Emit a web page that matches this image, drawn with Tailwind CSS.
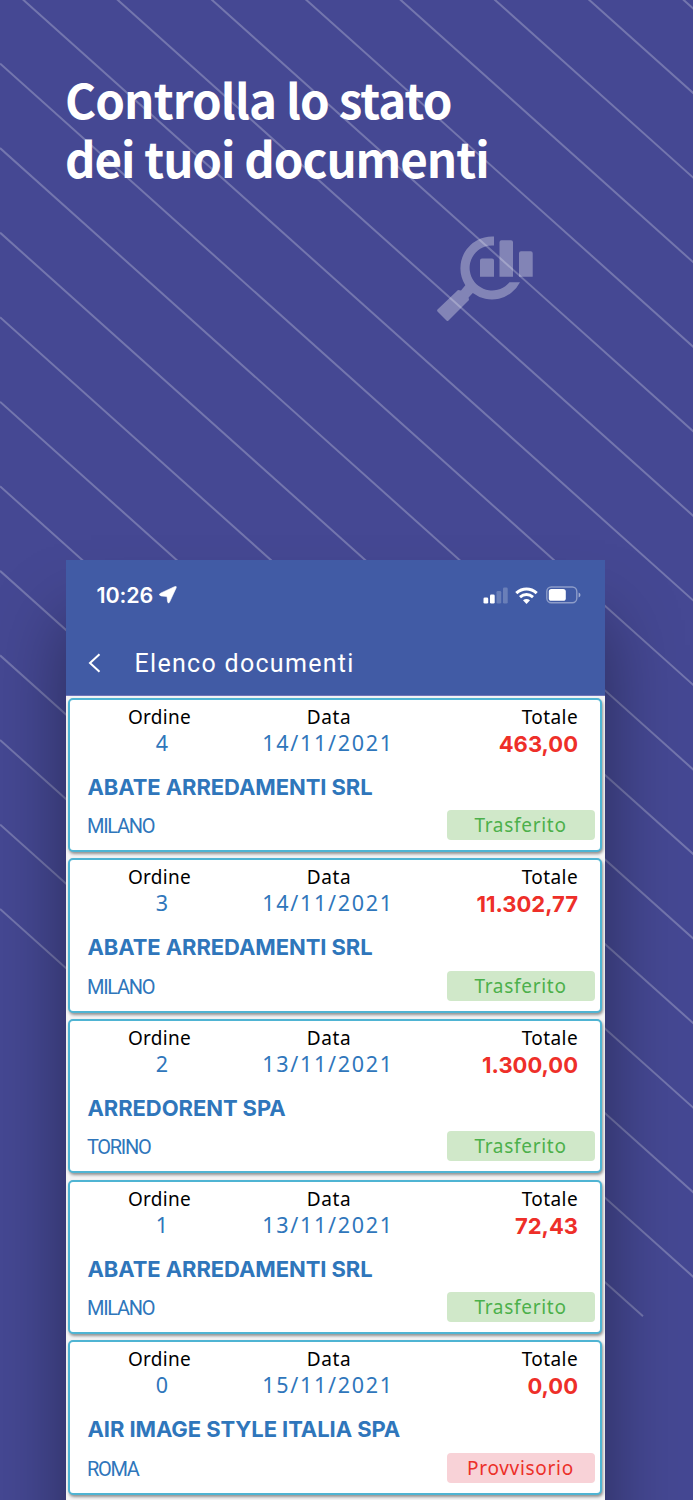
<!DOCTYPE html>
<html lang="it">
<head>
    <meta charset="UTF-8">
    <meta name="viewport" content="width=device-width, initial-scale=1.0">
    <title>Elenco documenti</title>
    <script src="https://cdn.jsdelivr.net/npm/@tailwindcss/browser@4"></script>
</head>
<body class="bg-[#454893]">
    <div class="relative w-[693px] h-[1500px] overflow-hidden bg-[#454893]">
        <!-- Diagonal lines -->
        <svg class="absolute inset-0" width="693" height="1500" fill="none" stroke="#fff" stroke-opacity=".25" stroke-width="2">
            <g id="lines"></g>
        </svg>

        <div class="relative flex flex-col h-full">
            <h1 class="shrink-0 h-[236px] pt-[69px] pl-[65px] font-['Noto_Sans_CJK_JP','Noto_Sans',sans-serif] font-bold text-[47.5px] leading-[59px] text-white whitespace-nowrap">
                <span class="block tracking-[-0.9px]">Controlla lo stato</span>
                <span class="block tracking-[-1.05px]">dei tuoi documenti</span>
            </h1>

            <div class="shrink-0 h-[324px] pl-[436px]">
                <svg class="text-white/33" width="98" height="86" viewBox="0 0 98 86" fill="currentColor">
                    <path d="M58 0.5V9.500A22.500 22.500 0 1 0 73.500 46.200H84A31.500 31.500 0 0 1 36.800 57L32.600 61.400 33 64 12.500 84.500Q11.500 85.500 10.500 84.500L1.500 75.500Q.7 74.500 1.500 73.500L22 54 25 54.500 29.300 49.200A31.800 31.800 0 0 1 58 .5Z"/>
                    <path d="M46 22.500H56Q58 22.500 58 24.500V40.800H44V24.500Q44 22.500 46 22.500ZM65.500 4.200H75Q77 4.200 77 6.200V40.800H63.500V6.200Q63.500 4.200 65.500 4.200ZM85 15.300H94.700Q96.700 15.300 96.700 17.300V40.800H83V17.300Q83 15.300 85 15.300Z"/>
                </svg>
            </div>

            <main class="ml-[65.5px] w-[539.5px] h-[1040px] shrink-0 bg-[#f4f4f5] shadow-[0_60px_70px_rgba(0,0,0,0.4)]">
                <header class="h-[135.5px] bg-[#415ba5] text-white border-b border-[#6f74b8]">
                    <div class="flex items-center h-[70px] pl-[31px] pr-[24.500px]">
                        <span class="font-['Inter',sans-serif] font-semibold text-[21.5px] tracking-[-0.1px]">10:26</span>
                        <svg class="ml-[6px] mb-[1px]" width="18" height="18" viewBox="0 0 18 18" fill="currentColor">
                            <path d="M15.500.7Q18-.3 17.100 2L10.600 16Q9.400 18.400 8.600 15.800L8 10.500 2 9.900Q-1.100 8.900 1.500 7.200Z" stroke="currentColor" stroke-width=".6"/>
                        </svg>
                        <div class="flex items-center ml-auto">
                            <svg width="25" height="17" viewBox="0 0 25 17" fill="currentColor">
                                <rect x="0.500" y="10.500" width="4.700" height="6" rx="1.300"/>
                                <rect x="7" y="7.500" width="4.700" height="9" rx="1.300"/>
                                <rect x="13.500" y="4" width="4.700" height="12.500" rx="1.300" opacity=".22"/>
                                <rect x="20" y="0.500" width="4.700" height="16" rx="1.300" opacity=".22"/>
                            </svg>
                            <svg class="ml-[7px]" width="23" height="17" viewBox="0 0 23 17" fill="none" stroke="currentColor">
                                <path d="M1.300 6.100Q6 2 11.500 2T21.700 6.100" stroke-width="3.200"/>
                                <path d="M5 10.100Q8 7.500 11.500 7.500T18 10.100" stroke-width="3"/>
                                <path d="M8 13.200Q11.500 10.600 15 13.200L11.500 16.900Z" fill="currentColor" stroke="none"/>
                            </svg>
                            <svg class="ml-[8px]" width="35" height="18" viewBox="0 0 35 18" fill="none">
                                <rect x="0.800" y="1" width="30" height="15.800" rx="4.500" stroke="#fff" stroke-opacity=".4" stroke-width="1.400"/>
                                <rect x="2.800" y="3" width="17" height="11.800" rx="2.600" fill="#fff"/>
                                <path d="M32.600 6.400Q34.500 7.200 34.500 8.900T32.600 11.400Z" fill="#fff" fill-opacity=".5"/>
                            </svg>
                        </div>
                    </div>
                    <div class="flex items-center h-[65px] pl-[22px]">
                        <svg width="13" height="20" viewBox="0 0 13 20" fill="none" stroke="currentColor" stroke-width="2">
                            <path d="M11.500 1.200 2 10l9.500 8.800"/>
                        </svg>
                        <span class="ml-[34px] pt-[2px] font-['Roboto',sans-serif] text-[25px] tracking-[1.3px]">Elenco documenti</span>
                    </div>
                </header>
                <div id="list" class="flex flex-col gap-[6.200px] pt-[2px] pl-[2.500px] pr-[3px]"></div>
            </main>
        </div>
    </div>

    <script>
        const documents = [
            { order: '4', date: '14/11/2021', total: '463,00', name: 'ABATE ARREDAMENTI SRL', city: 'MILANO', status: 'Trasferito' },
            { order: '3', date: '14/11/2021', total: '11.302,77', name: 'ABATE ARREDAMENTI SRL', city: 'MILANO', status: 'Trasferito' },
            { order: '2', date: '13/11/2021', total: '1.300,00', name: 'ARREDORENT SPA', city: 'TORINO', status: 'Trasferito' },
            { order: '1', date: '13/11/2021', total: '72,43', name: 'ABATE ARREDAMENTI SRL', city: 'MILANO', status: 'Trasferito' },
            { order: '0', date: '15/11/2021', total: '0,00', name: 'AIR IMAGE STYLE ITALIA SPA', city: 'ROMA', status: 'Provvisorio' },
        ];

        const badges = {
            Trasferito: 'bg-[#d0e8c9] text-[#4cb04b]',
            Provvisorio: 'bg-[#f8d2d7] text-[#ec3029]',
        };

        document.getElementById('list').innerHTML = documents.map(doc => `
            <article class="h-[154.500px] pt-[4px] border-2 border-[#4fb4d3] rounded-[5px] bg-white shadow-[1px_2px_3px_rgba(0,0,0,0.4)] font-['Noto_Sans',sans-serif] text-[#2f76bb]">
                <div class="grid grid-cols-[180px_156px_1fr] pr-[22px] text-center">
                    <div>
                        <p class="h-[26px] leading-[26px] pr-[1px] text-[19px] tracking-[0.300px] text-black">Ordine</p>
                        <p class="h-[26px] leading-[26px] pl-[4px] text-[21.500px]">${doc.order}</p>
                    </div>
                    <div>
                        <p class="h-[26px] leading-[26px] pl-[2px] text-[19px] tracking-[0.600px] text-black">Data</p>
                        <p class="h-[26px] leading-[26px] text-[21.500px] tracking-[1.700px] whitespace-nowrap -mx-2">${doc.date}</p>
                    </div>
                    <div class="text-right">
                        <p class="h-[26px] leading-[26px] text-[19px] tracking-[0.400px] text-black">Totale</p>
                        <p class="h-[26px] leading-[28px] font-['Inter',sans-serif] font-bold text-[22px] text-[#ee2f29]">${doc.total}</p>
                    </div>
                </div>
                <h2 class="mt-[15px] h-[32px] leading-[33px] pl-[17.500px] font-['Inter',sans-serif] font-bold text-[22px] tracking-[-0.080px]">${doc.name}</h2>
                <div class="flex items-center justify-between mt-[7.500px] pl-[17px] pr-[5.500px]">
                    <span class="font-['Roboto',sans-serif] text-[20px] leading-[30px] tracking-[-1.300px] -mb-[2px]">${doc.city}</span>
                    <span class="w-[148px] h-[30px] rounded-[4px] text-center text-[19px] leading-[31px] tracking-[0.700px] ${badges[doc.status]}">${doc.status}</span>
                </div>
            </article>`).join('');

        // parallel lines, the lower ones stop before the right edge
        let d = '';
        for (let k = -8; k <= 10; k++) {
            const y = 63.5 + 84.55 * k;
            const end = k < 8 ? 700 : k === 8 ? 643 : 400;
            d += `<path d="M0 ${y}L${end} ${y + end * 0.8965}"/>`;
        }
        document.getElementById('lines').innerHTML = d;
    </script>
</body>
</html>
